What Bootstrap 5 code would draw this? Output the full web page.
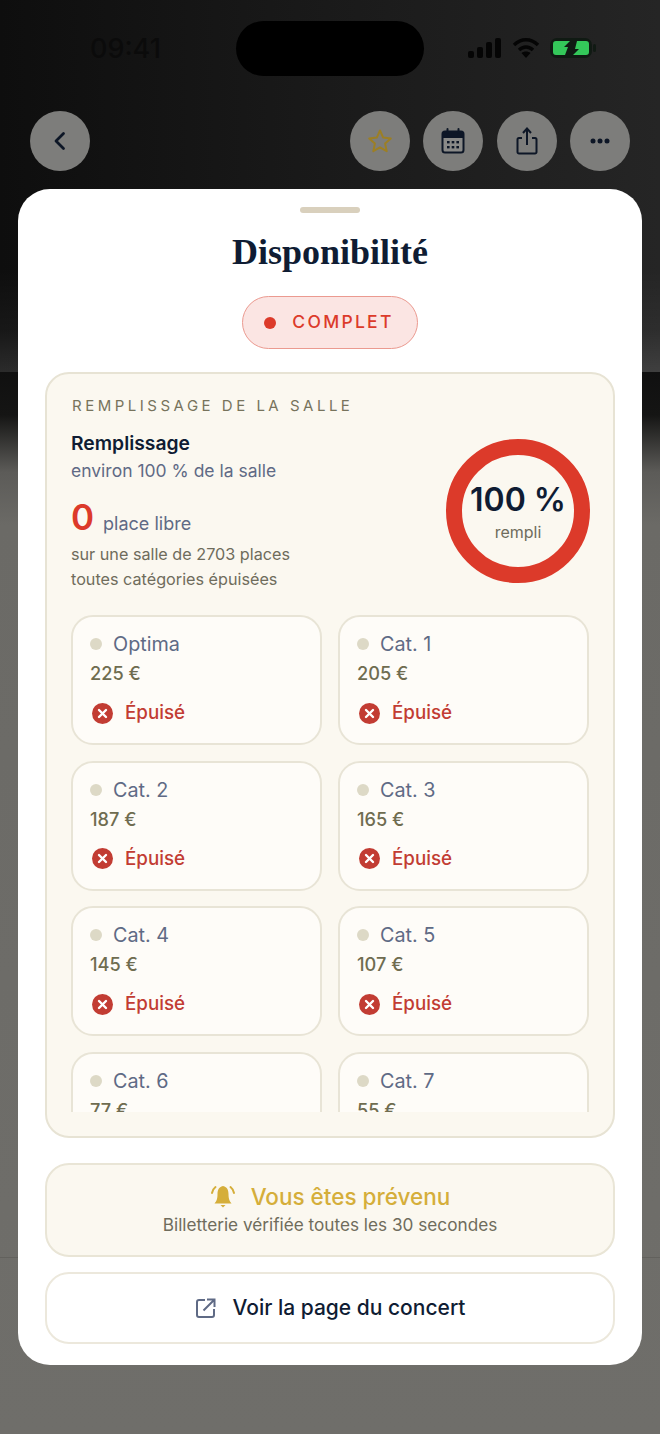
<!DOCTYPE html>
<html lang="fr">
<head>
    <meta charset="UTF-8">
    <meta name="viewport" content="width=device-width, initial-scale=1.0">
    <title>Disponibilité</title>
    <link rel="stylesheet" href="https://cdn.jsdelivr.net/npm/bootstrap@5.3.0/dist/css/bootstrap.min.css">
    <script src="https://cdn.jsdelivr.net/npm/bootstrap@5.3.0/dist/js/bootstrap.bundle.min.js"></script>
    <style>
        html, body { height: 1434px; overflow: hidden; }
        body {
            font-family: Inter, "Open Sans", sans-serif;
            color: #0f1c33;
            background:
                linear-gradient(180deg, transparent 0 1257px, #62615d 1257px 1258px, transparent 1258px),
                linear-gradient(180deg, transparent 0 372px, #101010 372px, #151514 415px, #5c5b58 472px, #6b6a66 525px, #6f6e6a 100%),
                linear-gradient(180deg, transparent 0 270px, rgba(255,255,255,.04) 330px, rgba(255,255,255,.12) 372px),
                linear-gradient(90deg, #0e0e0e 0, #191919 45%, #252525 100%);
        }
        .status-row { height: 111px; padding: 21px 0 0 90px; align-items: flex-start; }
        .clock { font-size: 27px; font-weight: 500; line-height: 56px; color: #0b0b0b; width: 146px; }
        .island { width: 188px; height: 55px; background: #000; border-radius: 28px; }
        .status-icons { margin-left: 44px; margin-top: 17px; gap: 10px; }
        .top-bar { padding: 0 30px; height: 78px; align-items: flex-start; }
        .round-btn { width: 60px; height: 60px; background: #7d7d7b; border-radius: 50%; }
        .sheet {
            margin: 0 18px; height: 1176px; background: #fff; border-radius: 32px;
            padding: 18px 27px 0; display: flex; flex-direction: column; align-items: stretch;
        }
        .grabber { width: 60px; height: 6px; border-radius: 3px; background: #d9d0bd; margin: 0 auto; }
        .sheet-title { font-family: "Liberation Serif", serif; font-weight: 700; font-size: 36px; line-height: 44px; margin: 17px 0 22px; text-align: center; color: #0f1c33; }
        .complet-pill {
            width: 176px; height: 53px; margin: 0 auto 23px; padding-right: 2px; border: 1.5px solid #eb9a90; border-radius: 27px;
            background: #fbe5e3; color: #dc3a2a; font-size: 17.5px; font-weight: 500; letter-spacing: 2.3px;
        }
        .complet-pill i { width: 12px; height: 12px; background: #dc3a2a; border-radius: 50%; margin-right: 16px; }
        .fill-box { height: 766px; flex: none; background: #fbf8f0; border: 2px solid #e7e3d4; border-radius: 24px; padding: 22px 23px 0 24px; overflow: hidden; }
        .fill-kicker { font-size: 15px; letter-spacing: 3.5px; color: #77735c; line-height: 20px; margin-bottom: 15px; padding-left: 1px; }
        .fill-name { font-size: 19.3px; font-weight: 600; line-height: 24px; color: #0f1c33; }
        .fill-sub { font-size: 17.5px; line-height: 24px; margin-top: 4px; color: #5f6a85; }
        .free-line { margin-top: 13px; line-height: 42px; height: 44px; color: #5f6a85; font-size: 18px; }
        .free-line b { font-size: 35px; font-weight: 600; color: #dc3a2a; margin-right: 9px; }
        .fill-note { font-size: 16.2px; line-height: 25px; color: #6f6c5c; margin-top: 2px; }
        .ring {
            width: 144px; height: 144px; border: 16px solid #dc3a2a; border-radius: 50%; margin-top: 8px; flex: none;
        }
        .ring-pct { font-size: 32px; font-weight: 600; line-height: 38px; color: #0f1c33; white-space: nowrap; margin: 0 -12px; }
        .ring-lbl { font-size: 16px; line-height: 20px; color: #6f6c5c; margin-top: 3px; }
        .cat-scroll { height: 497px; overflow: hidden; margin-top: 23px; }
        .cat-grid { display: grid; grid-template-columns: 251px 251px; column-gap: 16px; row-gap: 15.5px; }
        .cat-tile { height: 130px; background: #fefcf8; border: 2px solid #e8e4d6; border-radius: 22px; padding: 14px 17px 0; }
        .cat-name { font-size: 19.8px; line-height: 26px; color: #5f6a85; }
        .cat-name i { display: inline-block; width: 12px; height: 12px; background: #ddd9c6; border-radius: 50%; margin-right: 11px; position: relative; top: -1px; }
        .cat-price { font-size: 18.2px; font-weight: 500; line-height: 24px; color: #6f6c50; margin-top: 4px; }
        .cat-status { font-size: 18.8px; font-weight: 500; line-height: 26px; color: #c23c33; margin-top: 15px; padding-left: 2px; }
        .cat-status svg { margin-right: 12px; }
        .notify-box { height: 94px; flex: none; margin-top: 25px; background: #fbf8f0; border: 2px solid #e9e5d6; border-radius: 24px; }
        .notify-title { font-size: 22.5px; font-weight: 500; color: #d5ae3a; line-height: 28px; gap: 15px; margin-top: -1px; }
        .notify-sub { font-size: 17.2px; color: #6f6c5c; line-height: 22px; margin-top: 3px; }
        .page-btn { height: 72px; flex: none; margin-top: 15px; padding-left: 14px; border: 2px solid #ece8dc; border-radius: 24px; color: #0f1c33; font-size: 21px; font-weight: 500; background: #fff; gap: 16px; }
    </style>
</head>
<body>
    <div class="status-row d-flex">
        <span class="clock">09:41</span>
        <div class="island"></div>
        <div class="status-icons d-flex align-items-center">
            <svg width="34" height="20" viewBox="0 0 34 20"><g fill="#050505"><rect x="0" y="13" width="6" height="7" rx="2"/><rect x="9" y="9" width="6" height="11" rx="2"/><rect x="18" y="4" width="6" height="16" rx="2"/><rect x="27" y="0" width="6" height="20" rx="2"/></g></svg>
            <svg width="28" height="20" viewBox="0 0 28 20"><g fill="none" stroke="#050505" stroke-width="3.4"><path d="M2 7 C9 0 19 0 26 7"/><path d="M7 12 C11 8 17 8 21 12"/></g><path d="M9.500 15 C12 13 16 13 18.500 15 L14 20 Z" fill="#050505"/></svg>
            <svg width="46" height="20" viewBox="0 0 46 20"><rect x="0" y="0" width="42" height="20" rx="7" fill="#101a13"/><rect x="43" y="6" width="3" height="8" rx="1.500" fill="#101a13"/><path d="M6 3 H20 L14 9 H18 L15 17 H6 a3 3 0 0 1-3-3 V6 a3 3 0 0 1 3-3 Z" fill="#34c85a"/><path d="M27 3 H36 a3 3 0 0 1 3 3 V14 a3 3 0 0 1-3 3 H23 L29 11 H25 Z" fill="#34c85a"/></svg>
        </div>
    </div>

    <div class="top-bar d-flex">
        <div class="round-btn d-flex align-items-center justify-content-center">
            <svg width="14" height="22" viewBox="0 0 14 22"><path d="M10.500 3.500 L3 11 L10.500 18.500" fill="none" stroke="#0d1626" stroke-width="2.800" stroke-linecap="round" stroke-linejoin="round"/></svg>
        </div>
        <div class="ms-auto d-flex" style="gap:13.5px">
            <div class="round-btn d-flex align-items-center justify-content-center">
                <svg width="26" height="26" viewBox="0 0 26 26"><path d="M13 2.500 L16.200 9.600 L23.800 10.400 L18.100 15.600 L19.700 23.200 L13 19.300 L6.300 23.200 L7.900 15.600 L2.200 10.400 L9.800 9.600 Z" fill="none" stroke="#9c7f24" stroke-width="2" stroke-linejoin="round"/></svg>
            </div>
            <div class="round-btn d-flex align-items-center justify-content-center">
                <svg width="24" height="26" viewBox="0 0 24 26"><rect x="1.500" y="3.500" width="21" height="21" rx="2.500" fill="#8a8a88" stroke="#0d1626" stroke-width="2"/><path d="M2 4 h20 v6 H2 Z" fill="#0d1626"/><path d="M6.500 1 v4 M17.500 1 v4" stroke="#0d1626" stroke-width="2" stroke-linecap="round"/><g fill="#0d1626"><rect x="6" y="13" width="2.600" height="2.400"/><rect x="10.700" y="13" width="2.600" height="2.400"/><rect x="15.400" y="13" width="2.600" height="2.400"/><rect x="6" y="18" width="2.600" height="2.400"/><rect x="10.700" y="18" width="2.600" height="2.400"/><rect x="15.400" y="18" width="2.600" height="2.400"/></g></svg>
            </div>
            <div class="round-btn d-flex align-items-center justify-content-center">
                <svg width="22" height="28" viewBox="0 0 22 28"><path d="M6 11 H3 a1.500 1.500 0 0 0-1.500 1.500 V25 a1.500 1.500 0 0 0 1.500 1.500 H19 a1.500 1.500 0 0 0 1.500-1.500 V12.500 a1.500 1.500 0 0 0-1.500-1.500 H16" fill="none" stroke="#0d1626" stroke-width="2"/><path d="M11 18 V2 M7 6 L11 1.500 L15 6" fill="none" stroke="#0d1626" stroke-width="2"/></svg>
            </div>
            <div class="round-btn d-flex align-items-center justify-content-center">
                <svg width="20" height="6" viewBox="0 0 20 6"><g fill="#0d1626"><circle cx="3" cy="3" r="2.500"/><circle cx="10" cy="3" r="2.500"/><circle cx="17" cy="3" r="2.500"/></g></svg>
            </div>
        </div>
    </div>

    <div class="sheet">
        <div class="grabber"></div>
        <h1 class="sheet-title">Disponibilité</h1>
        <div class="complet-pill d-flex align-items-center justify-content-center"><i></i>COMPLET</div>

        <div class="fill-box">
            <div class="fill-kicker">REMPLISSAGE DE LA SALLE</div>
            <div class="d-flex justify-content-between">
                <div>
                    <div class="fill-name">Remplissage</div>
                    <div class="fill-sub">environ 100 % de la salle</div>
                    <div class="free-line"><b>0</b>place libre</div>
                    <div class="fill-note">sur une salle de 2703 places<br>toutes catégories épuisées</div>
                </div>
                <div class="ring d-flex flex-column align-items-center justify-content-center text-center">
                    <div class="ring-pct">100 %</div>
                    <div class="ring-lbl">rempli</div>
                </div>
            </div>

            <div class="cat-scroll">
                <div class="cat-grid" id="cat-grid"></div>
            </div>
        </div>

        <div class="notify-box d-flex flex-column align-items-center justify-content-center">
            <div class="notify-title d-flex align-items-center">
                <svg width="26" height="26" viewBox="0 0 26 26"><path d="M13 2 C8.500 3 7.500 6.500 7.500 10 C7.500 15 6.500 17 4.500 19.500 H21.500 C19.500 17 18.500 15 18.500 10 C18.500 6.500 17.500 3 13 2 Z" fill="#d5ae3a"/><path d="M10.500 21 H15.500 L13 23.500 Z" fill="#d5ae3a"/><path d="M5.500 3 C3.500 4.500 2.500 6.500 2 9 M20.500 3 C22.500 4.500 23.500 6.500 24 9" fill="none" stroke="#d5ae3a" stroke-width="2" stroke-linecap="round"/></svg>
                Vous êtes prévenu
            </div>
            <div class="notify-sub">Billetterie vérifiée toutes les 30 secondes</div>
        </div>

        <a class="btn page-btn d-flex align-items-center justify-content-center" href="#">
            <svg width="20" height="20" viewBox="0 0 20 20"><path d="M9 2 H3 a2 2 0 0 0-2 2 V17 a2 2 0 0 0 2 2 H16 a2 2 0 0 0 2-2 V11" fill="none" stroke="#5f6a85" stroke-width="2"/><path d="M7.500 12.500 L18 2 M11 1.500 H18.500 V9" fill="none" stroke="#5f6a85" stroke-width="2"/></svg>
            Voir la page du concert
        </a>
    </div>

    <script>
        const cats = [["Optima", 225], ["Cat. 1", 205], ["Cat. 2", 187], ["Cat. 3", 165], ["Cat. 4", 145], ["Cat. 5", 107], ["Cat. 6", 77], ["Cat. 7", 55]];
        const grid = document.getElementById("cat-grid");
        cats.forEach(([name, price]) => {
            const tile = document.createElement("div");
            tile.className = "cat-tile";
            tile.innerHTML = `
                <div class="cat-name"><i></i>${name}</div>
                <div class="cat-price">${price} €</div>
                <div class="cat-status d-flex align-items-center">
                    <svg width="21" height="21" viewBox="0 0 21 21"><circle cx="10.500" cy="10.500" r="10.500" fill="#c23c33"/><path d="M7 7 L14 14 M14 7 L7 14" stroke="#fff" stroke-width="2.400" stroke-linecap="round"/></svg>
                    Épuisé
                </div>`;
            grid.appendChild(tile);
        });
    </script>
</body>
</html>
